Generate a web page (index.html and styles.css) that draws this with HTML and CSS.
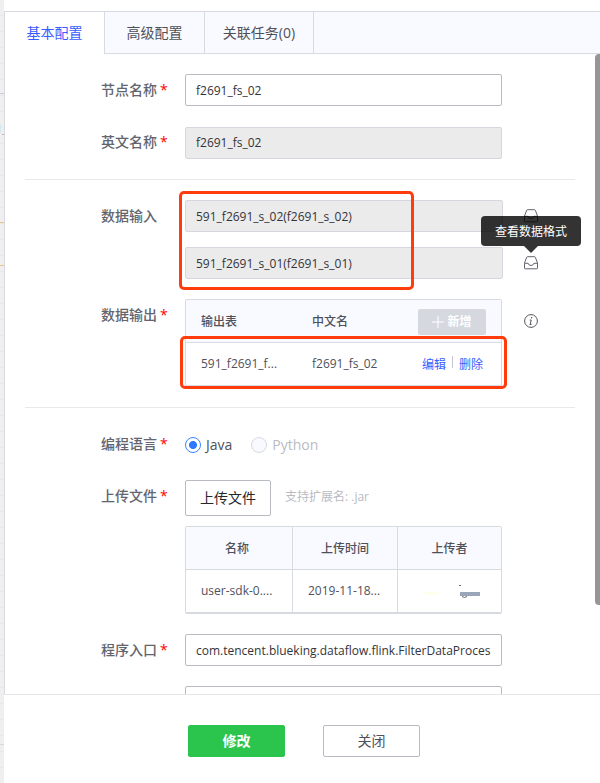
FILE: index.html
```html
<!DOCTYPE html>
<html lang="zh-CN">
<head>
<meta charset="utf-8">
<title>节点配置</title>
<link rel="stylesheet" href="styles.css">
</head>
<body>
<div class="app">
  <aside class="canvas-edge"><i class="wire wire-a"></i><i class="node"></i><i class="wire wire-b"></i><i class="wire wire-c"></i><i class="wire wire-d"></i><i class="wire wire-e"></i></aside>
  <main class="panel">
    <nav class="tabs">
      <a class="tab tab-active">基本配置</a>
      <a class="tab">高级配置</a>
      <a class="tab tab-wide">关联任务(0)</a>
    </nav>
    <div class="content">
      <section class="group group-names">
        <div class="row">
          <label class="label">节点名称<b class="req">*</b></label>
          <div class="input">f2691_fs_02</div>
        </div>
        <div class="row row-raised">
          <label class="label">英文名称<b class="req">*</b></label>
          <div class="input disabled">f2691_fs_02</div>
        </div>
      </section>
      <section class="group group-data">
        <div class="row">
          <label class="label">数据输入</label>
          <div class="sources">
            <div class="source">
              <div class="input disabled">591_f2691_s_02(f2691_s_02)</div>
              <svg class="tray" viewBox="0 0 16 14"><path d="M1.500 7 3.700 1.200Q3.900.7 4.400.7h7.200q.5 0 .7.5L14.500 7v5q0 .8-.8.8H2.300q-.8 0-.8-.8V7.300h3.700q.4 2.200 2.800 2.200t2.800-2.200h3.500"/></svg>
            </div>
            <div class="source">
              <div class="input disabled">591_f2691_s_01(f2691_s_01)</div>
              <svg class="tray" viewBox="0 0 16 14"><path d="M1.500 7 3.700 1.200Q3.900.7 4.400.7h7.200q.5 0 .7.5L14.500 7v5q0 .8-.8.8H2.300q-.8 0-.8-.8V7.300h3.700q.4 2.200 2.800 2.200t2.800-2.200h3.500"/></svg>
              <div class="tooltip">查看数据格式</div>
            </div>
            <div class="mark mark-sources"></div>
          </div>
        </div>
        <div class="row row-output">
          <label class="label">数据输出<b class="req">*</b></label>
          <div class="output">
            <div class="out-row out-head">
              <span>输出表</span><span>中文名</span>
              <span class="add"><svg viewBox="0 0 12 12"><path d="M6 0v12M0 6h12"/></svg>新增</span>
            </div>
            <div class="out-row">
              <span>591_f2691_f...</span><span>f2691_fs_02</span>
              <span class="links"><a>编辑</a><i></i><a>删除</a></span>
            </div>
            <div class="mark mark-output"></div>
          </div>
          <svg class="info" viewBox="0 0 14 14"><circle cx="7" cy="7" r="6.400"/><path d="M5.700 6h1.500l-.9 4q-.1.600.500.600.7-.1 1-.7M5.600 10.600h1.200"/><circle class="dot" cx="7.600" cy="3.700" r=".8"/></svg>
        </div>
      </section>
      <section class="group group-code">
        <div class="row row-lang">
          <label class="label">编程语言<b class="req">*</b></label>
          <div class="radios">
            <span class="radio"><i class="ring on"></i>Java</span>
            <span class="radio off"><i class="ring"></i>Python</span>
          </div>
        </div>
        <div class="row row-upload">
          <label class="label">上传文件<b class="req">*</b></label>
          <div class="upload">
            <div class="upload-line"><span class="upload-btn">上传文件</span><span class="hint">支持扩展名: .jar</span></div>
            <div class="files">
              <div class="cell th">名称</div><div class="cell th">上传时间</div><div class="cell th">上传者</div>
              <div class="cell td">user-sdk-0....</div><div class="cell td">2019-11-18...</div>
              <div class="cell"><svg class="masked" viewBox="0 0 58 16"><path fill="#fffff0" d="M0 8h16v3H0z"/><path fill="#6a6c78" d="M36 1h2v1h-2z"/><path fill="none" stroke="#63656e" d="M39 12.500q2.500 2 5 0"/><path fill="#9aa5b8" d="M37 8h20v4H37z"/></svg></div>
            </div>
          </div>
        </div>
        <div class="row">
          <label class="label">程序入口<b class="req">*</b></label>
          <div class="input">com.tencent.blueking.dataflow.flink.FilterDataProces</div>
        </div>
        <div class="row">
          <label class="label"></label>
          <div class="input"></div>
        </div>
      </section>
      <div class="scrollbar"></div>
    </div>
    <footer class="footer">
      <button class="btn primary">修改</button>
      <button class="btn">关闭</button>
    </footer>
  </main>
</div>
</body>
</html>
```
FILE: styles.css
```css
* { box-sizing: border-box; }
body {
  margin: 0;
  font: 12px/18px "Open Sans", "Noto Sans CJK SC", sans-serif;
  color: #63656e;
  background: #fff;
}
.app { display: flex; width: 600px; height: 783px; overflow: hidden; }
.canvas-edge {
  position: relative;
  width: 4px;
  background: repeating-linear-gradient(#efefef 0 15px, #e9e9e9 15px 16px);
}
.canvas-edge i { position: absolute; left: 0; width: 4px; height: 1px; }
.wire-a { top: 93px; background: #c9ced3; }
.canvas-edge .node { top: 124px; width: 1px; height: 9px; background: #d5e7f0; }
.canvas-edge .wire-b { top: 134px; left: 2px; width: 2px; background: #b9b9b9; }
.wire-c { top: 222px; background: #eec486; }
.wire-d { top: 265px; background: #eec486; }
.wire-e { top: 744px; background: #d9d9d9; }
.panel { flex: 1; display: flex; flex-direction: column; min-width: 0; padding-top: 11px; background: #fff; }
.tabs {
  display: flex;
  height: 43px;
  flex: none;
  background: #f9faff;
  border-top: 1px solid #d8dae2;
  border-left: 1px solid #d8dae2;
  box-shadow: inset 0 -1px #d8dae2;
}
.tab { width: 100px; border-right: 1px solid #d8dae2; text-align: center; font-size: 14px; line-height: 42px; color: #4f515a; }
.tab-active { background: #fff; color: #3a5cff; }
.tab-wide { width: 109px; }
.content {
  position: relative;
  height: 640px;
  flex: none;
  overflow: hidden;
  padding: 0 25px 0 20px;
  border-left: 1px solid #d8dae2;
}
.group { display: flex; flex-direction: column; padding-top: 20px; }
.group + .group { border-top: 1px solid #e9e9eb; }
.group-names { gap: 21px; padding-bottom: 20px; }
.group-data { gap: 20px; padding-bottom: 20px; }
.row { display: flex; align-items: flex-start; flex: none; }
.label {
  width: 142px;
  margin-right: 18px;
  padding-left: 76px;
  line-height: 32px;
  font-size: 14px;
  font-weight: 500;
  white-space: nowrap;
  color: #63656e;
}
.req { margin-left: 3px; color: #f00; font-size: 14px; font-weight: 500; }
.input {
  width: 317px;
  height: 32px;
  padding: 0 10px;
  overflow: hidden;
  white-space: nowrap;
  border: 1px solid #b9bbc3;
  border-radius: 2px;
  line-height: 31px;
  color: #33343a;
  background: #fff;
}
.input.disabled { background: #ebebeb; border-color: #d5d7de; }
.row-raised .input { line-height: 29px; }
.row-raised .label { line-height: 30px; }
.sources { position: relative; display: flex; flex-direction: column; gap: 15px; }
.source { position: relative; display: flex; align-items: center; gap: 20px; }
.source .input { width: 318px; }
.tray { width: 16px; height: 14px; fill: none; stroke: #63656e; stroke-width: 1; }
.tooltip {
  position: absolute;
  z-index: 2;
  left: 296px;
  top: -31px;
  width: 100px;
  height: 30px;
  border-radius: 4px;
  background: rgba(0, 0, 0, .8);
  color: #fff;
  text-align: center;
  line-height: 31px;
}
.tooltip::after {
  content: "";
  position: absolute;
  left: 43px;
  top: 30px;
  border: 7px solid transparent;
  border-top-color: rgba(0, 0, 0, .8);
  border-bottom: 0;
}
.mark { position: absolute; z-index: 1; border: 3px solid #ff3c0c; border-radius: 5px; }
.mark-sources { left: -6px; top: -9px; width: 235px; height: 99px; }
.mark-output { left: -6px; top: 36px; width: 327px; height: 53px; }
.output { position: relative; width: 317px; height: 88px; border: 1px solid #d8dae2; border-bottom-width: 2px; border-radius: 2px; }
.out-row { display: grid; grid-template-columns: 111px 106px 68px; height: 42px; padding-left: 15px; align-items: center; color: #4f515a; }
.out-head { height: 43px; padding-top: 2px; background: #f9faff; border-bottom: 1px solid #d8dae2; font-weight: 500; }
.add {
  display: flex;
  align-items: center;
  justify-content: center;
  gap: 3px;
  height: 26px;
  border-radius: 2px;
  background: #d5d8df;
  color: #fff;
  font-weight: 700;
}
.add svg { width: 12px; height: 12px; stroke: #fff; stroke-width: 1; }
.links { display: flex; align-items: center; padding: 2px 0 0 4px; color: #3a5cff; }
.links i { width: 1px; height: 12px; margin: -6px 6px 0; background: #c4c6cc; }
.info { width: 14px; height: 14px; margin: 15px 0 0 22px; fill: none; stroke: #55565c; stroke-width: 1; overflow: visible; }
.info .dot { fill: #55565c; stroke: none; }
.row-lang { height: 32px; }
.radios { display: flex; gap: 19px; font-size: 14px; line-height: 34px; }
.radio { display: flex; align-items: center; gap: 5px; color: #4f515a; }
.ring { width: 16px; height: 16px; border: 1px solid #d8dae2; border-radius: 50%; background: #f9faff; }
.ring.on { border-color: #3a84ff; background: radial-gradient(circle, #2f78ff 0 3.6px, #fff 4.400px); }
.radio.off { color: #b9bbc3; }
.group-code .row { margin-bottom: 20px; }
.upload-line { display: flex; align-items: center; }
.upload-btn { width: 86px; height: 36px; border: 1px solid #b9bbc3; border-radius: 2px; line-height: 34px; text-align: center; font-size: 14px; color: #26272b; }
.hint { margin: -2px 0 0 14px; color: #b9bbc3; }
.files {
  display: grid;
  grid-template-columns: 107px 105px 103px;
  grid-template-rows: 43px 42px;
  margin-top: 10px;
  border: 1px solid #d8dae2;
  border-bottom-width: 2px;
  border-radius: 2px;
}
.cell { display: flex; align-items: center; justify-content: center; border-right: 1px solid #d8dae2; color: #4f515a; }
.cell:nth-child(3n) { border-right: 0; }
.td { justify-content: flex-start; padding-left: 15px; }
.th { padding: 2px 4px 0 0; background: #f9faff; border-bottom: 1px solid #d8dae2; font-weight: 500; }
.th:nth-child(n+2) { padding-right: 0; }
.masked { width: 58px; height: 16px; margin: 2px 0 0 4px; }
.scrollbar { position: absolute; z-index: 1; right: 0; top: 0; width: 5px; height: 551px; border-radius: 4px 0 0 4px; background: #969696; }
.footer { flex: 1; display: flex; gap: 38px; padding: 30px 0 0 184px; border-top: 1px solid #e6e6e8; }
.btn { width: 97px; height: 32px; padding: 0; border: 1px solid #b9bbc3; border-radius: 2px; background: #fff; font: 14px/30px "Open Sans", "Noto Sans CJK SC", sans-serif; color: #4f515a; }
.btn.primary { border-color: #2bc54d; background: #2bc54d; color: #fff; font-weight: 700; }
```
